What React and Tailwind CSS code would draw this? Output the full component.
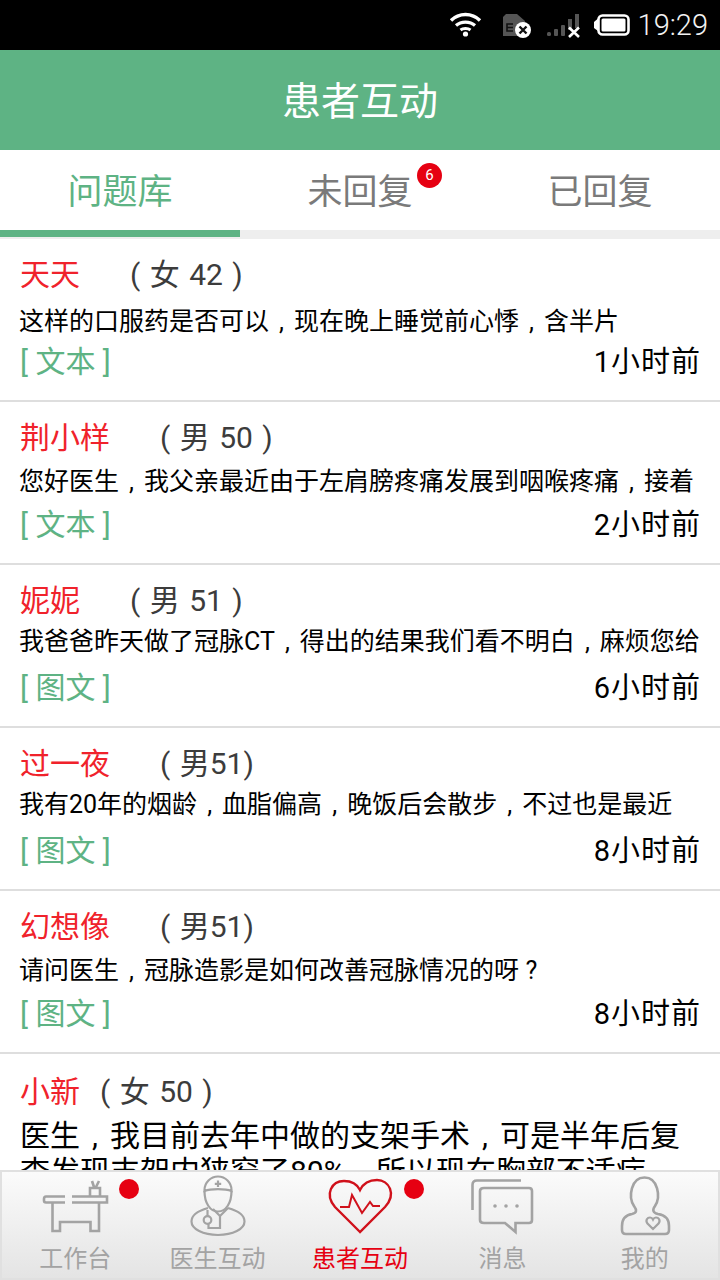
import React from "react";

const rows = [
  { n: "天天", g: "( 女 42 )", d: "这样的口服药是否可以，现在晚上睡觉前心悸，含半片", t: "[ 文本 ]", a: "1小时前", dm: "mt-[8px]", tm: "mt-[5px]" },
  { n: "荆小样", g: "( 男 50 )", d: "您好医生，我父亲最近由于左肩膀疼痛发展到咽喉疼痛，接着", t: "[ 文本 ]", a: "2小时前", dm: "mt-[5px]", tm: "mt-[8px]" },
  { n: "妮妮", g: "( 男 51 )", d: "我爸爸昨天做了冠脉CT，得出的结果我们看不明白，麻烦您给", t: "[ 图文 ]", a: "6小时前", dm: "mt-[2px]", tm: "mt-[11px]" },
  { n: "过一夜", g: "( 男51)", d: "我有20年的烟龄，血脂偏高，晚饭后会散步，不过也是最近", t: "[ 图文 ]", a: "8小时前", dm: "mt-[2px]", tm: "mt-[11px]" },
  { n: "幻想像", g: "( 男51)", d: "请问医生，冠脉造影是如何改善冠脉情况的呀？", t: "[ 图文 ]", a: "8小时前", dm: "mt-[5px]", tm: "mt-[8px]" },
];

// The reference centres full-width punctuation in its cell.
function Punct({ text }) {
  return text.split(/([，？])/).map((part, i) =>
    part === "，" || part === "？" ? (
      <span key={i} className="inline-block w-[1em] text-center">{part === "，" ? "," : "?"}</span>
    ) : (
      <React.Fragment key={i}>{part}</React.Fragment>
    )
  );
}

function Row({ r }) {
  return (
    <div className="h-[163px] shrink-0 border-b-2 border-[#dedede] px-5 pt-[15px] flex flex-col">
      <div className="flex items-center h-[42px] leading-[42px]">
        <span className="text-[30px] text-[#f0222b]">{r.n}</span>
        <span className="text-[30px] text-[#3c3c3c] whitespace-pre ml-[50px] [word-spacing:2px]">{r.g}</span>
      </div>
      <div className={`text-[25px] leading-[36px] text-black whitespace-nowrap ml-[-1px] ${r.dm}`}><Punct text={r.d} /></div>
      <div className={`flex justify-between items-center h-[36px] ${r.tm}`}>
        <span className="text-[30px] text-[#5eb384] mb-[4px]">{r.t}</span>
        <span className="text-[29px] text-black tracking-[1px] mr-[-1px]">{r.a}</span>
      </div>
    </div>
  );
}

function NavItem({ label, active, dot, children }) {
  return (
    <div className="relative flex flex-col items-center">
      {children}
      <span className={`mt-[1px] text-[24px] leading-[34px] whitespace-nowrap ${active ? "text-[#e60012]" : "text-[#a3a3a3]"}`}>{label}</span>
      {dot && <span className="absolute top-[7px] left-[115px] w-5 h-5 rounded-full bg-[#e60012]" />}
    </div>
  );
}

const iconCls = "w-[80px] h-[66px] mt-[3px]";

export default function App() {
  return (
    <div className="w-[720px] h-[1280px] overflow-hidden flex flex-col bg-white" style={{ fontFamily: 'Roboto, "Noto Sans CJK SC", sans-serif' }}>
      {/* status bar */}
      <div className="h-[50px] shrink-0 bg-black flex items-center justify-end pr-[12px]">
        <svg width="34" height="28" viewBox="449 12 34 28" className="mr-[20px] mb-[2px]">
          <path d="M452 22.5C460 14.5 473 14.5 481 22.5" stroke="#fff" strokeWidth="3.4" fill="none" />
          <path d="M457 27.5C462 23 471 23 476 27.5" stroke="#fff" strokeWidth="3.2" fill="none" />
          <path d="M461.5 32C464 30 469 30 471.5 32" stroke="#fff" strokeWidth="3" fill="none" />
          <circle cx="466.5" cy="36" r="2.6" fill="#fff" />
        </svg>
        <svg width="30" height="26" viewBox="502 12 30 26" className="mr-[14px]">
          <path d="M506 14H517L525 21V36H503V17Z" fill="#555" />
          <path d="M513 24H507V31H513M507 27.5H513" stroke="#111" strokeWidth="1.6" fill="none" />
          <circle cx="523" cy="30" r="8" fill="#fff" />
          <path d="M519.5 26.5L526.5 33.5M526.5 26.5L519.5 33.5" stroke="#111" strokeWidth="2.4" />
        </svg>
        <svg width="34" height="26" viewBox="547 13 34 26" className="mr-[13px]">
          <rect x="548" y="33" width="4" height="4" rx="1.5" fill="#555" />
          <rect x="555" y="30" width="4" height="7" rx="1" fill="#555" />
          <rect x="562" y="26" width="4" height="11" rx="1" fill="#555" />
          <rect x="569" y="20" width="4" height="11" fill="#555" />
          <rect x="576" y="15" width="4" height="14" fill="#555" />
          <path d="M570 28.5L580 38M580 28.5L570 38" stroke="#fff" strokeWidth="2.6" />
        </svg>
        <svg width="38" height="24" viewBox="593 15 38 24" className="mr-[7px]">
          <path d="M594 24L598 20.5V33L594 30Z" fill="#fff" />
          <rect x="598.5" y="17.5" width="30" height="19" rx="4" fill="none" stroke="#fff" strokeWidth="2.6" />
          <rect x="601.5" y="20.5" width="24" height="13" rx="1.5" fill="#fff" />
        </svg>
        <span className="text-[29px] leading-[50px] text-[#f2f2f2] font-light">19:29</span>
      </div>

      {/* title */}
      <div className="h-[100px] shrink-0 bg-[#5eb384] flex items-center justify-center text-white text-[39px] pt-[4px]">患者互动</div>

      {/* tabs */}
      <div className="h-[80px] shrink-0 grid grid-cols-3 items-center text-center text-[35px] text-[#7a7a7a] pt-[7px]">
        <span className="text-[#5eb384]">问题库</span>
        <span className="relative">
          未回复
          <span className="absolute left-[177px] top-[-4px] w-[25px] h-[25px] rounded-full bg-[#e60012] text-white text-[15px] leading-[25px]">6</span>
        </span>
        <span>已回复</span>
      </div>
      <div className="h-[9px] shrink-0 bg-[#eeeeee]">
        <div className="w-[240px] h-[7px] bg-[#5eb384]" />
      </div>

      {/* list */}
      <div className="flex-1 min-h-0 overflow-hidden">
        {rows.map((r) => <Row key={r.n} r={r} />)}
        <div className="px-5 pt-[16px]">
          <div className="flex items-center h-[42px]">
            <span className="text-[30px] text-[#f0222b]">小新</span>
            <span className="text-[30px] text-[#3c3c3c] ml-[20px] [word-spacing:2px]">( 女 50 )</span>
          </div>
          <div className="text-[30px] leading-[36px] text-black whitespace-nowrap mt-[6px]">
            <Punct text="医生，我目前去年中做的支架手术，可是半年后复" /><br /><Punct text="查发现支架内狭窄了80%，所以现在胸部不适症" />
          </div>
        </div>
      </div>

      {/* bottom nav */}
      <div className="h-[110px] shrink-0 border-2 border-[#e0e0e0] bg-gradient-to-b from-[#fbfbfb] to-[#e4e4e4] grid grid-cols-5 px-[2px]">
        <NavItem label="工作台" dot>
          <svg viewBox="35 1175 80 66" className={iconCls} fill="none" stroke="#a3a3a3" strokeWidth="2.6">
            <path d="M65 1196.5H46Q44 1196.5 44 1199V1200.5Q44 1202.5 46 1202.5H65M72 1202.5H107V1196.5H72" />
            <path d="M52.5 1203V1231H60V1222H90.5V1231H99V1203" />
            <path d="M90 1196V1188H100V1196M94 1187L92 1181M96 1187L99 1181" />
          </svg>
        </NavItem>
        <NavItem label="医生互动">
          <svg viewBox="178 1175 80 66" className={iconCls} fill="none" stroke="#a3a3a3" strokeWidth="2.2">
            <path d="M204.5 1191V1190A13.5 13.5 0 0 1 231.5 1190V1191C225 1188.5 211 1188.5 204.5 1191Z" />
            <path d="M204.5 1191C204.5 1203 210 1211.5 218 1211.5C226 1211.5 231.5 1203 231.5 1191" />
            <path d="M218 1180.5V1187M214.8 1183.8H221.2" />
            <path d="M208 1208C197 1211 191.5 1215.5 191.5 1221.5C191.5 1229 203 1235 218 1235C233 1235 244.5 1229 244.5 1221.5C244.5 1215.5 239 1211 228 1208" />
            <path d="M213 1209L220 1216L228 1208" />
            <path d="M220 1216V1228H208.5V1224" />
            <path d="M207.5 1216V1210" />
            <circle cx="207.5" cy="1220" r="3.8" />
          </svg>
        </NavItem>
        <NavItem label="患者互动" active dot>
          <svg viewBox="320 1175 80 66" className={iconCls} fill="none" stroke="#d0111b" strokeWidth="2.4">
            <path d="M360 1232L335 1207C324 1194 332 1181 344 1181C351 1181 357 1184 360 1190C363 1184 369 1180 377 1180C389 1180 397 1194 385 1207Z" />
            <path d="M340 1207H349L352 1195L362 1213L370 1202L373 1206H380" strokeWidth="2" />
          </svg>
        </NavItem>
        <NavItem label="消息">
          <svg viewBox="462 1175 80 66" className={iconCls} fill="none" stroke="#a3a3a3" strokeWidth="2.6">
            <path d="M472.5 1210V1185Q472.5 1180.5 477 1180.5H521" />
            <path d="M484 1188H529Q532 1188 532 1191V1220Q532 1223 529 1223H515.5V1232L505 1223H484Q480 1223 480 1220V1191Q480 1188 484 1188Z" />
            <circle cx="495" cy="1206" r="1.8" fill="#a3a3a3" stroke="none" />
            <circle cx="506" cy="1206" r="1.8" fill="#a3a3a3" stroke="none" />
            <circle cx="517" cy="1206" r="1.8" fill="#a3a3a3" stroke="none" />
          </svg>
        </NavItem>
        <NavItem label="我的">
          <svg viewBox="604 1175 80 66" className={iconCls} fill="none" stroke="#a3a3a3" strokeWidth="2.6">
            <path d="M633 1206C627 1197 630 1177.5 643.5 1177.5C657 1177.5 660 1197 654 1206C651 1210 652 1213 657 1214C664 1215 668 1219 668 1226V1230Q668 1234 664 1234H625Q621 1234 621 1230V1226C621 1219 625 1215 631 1214C636 1213 636 1210 633 1206Z" />
            <path d="M652 1229L646.5 1223.5C644 1220 646.5 1217.5 649 1217.5C650.5 1217.5 651.5 1218.5 652 1219.5C652.5 1218.5 653.5 1217.5 655 1217.5C657.5 1217.5 660 1220 657.5 1223.5Z" strokeWidth="2.2" />
          </svg>
        </NavItem>
      </div>
    </div>
  );
}
